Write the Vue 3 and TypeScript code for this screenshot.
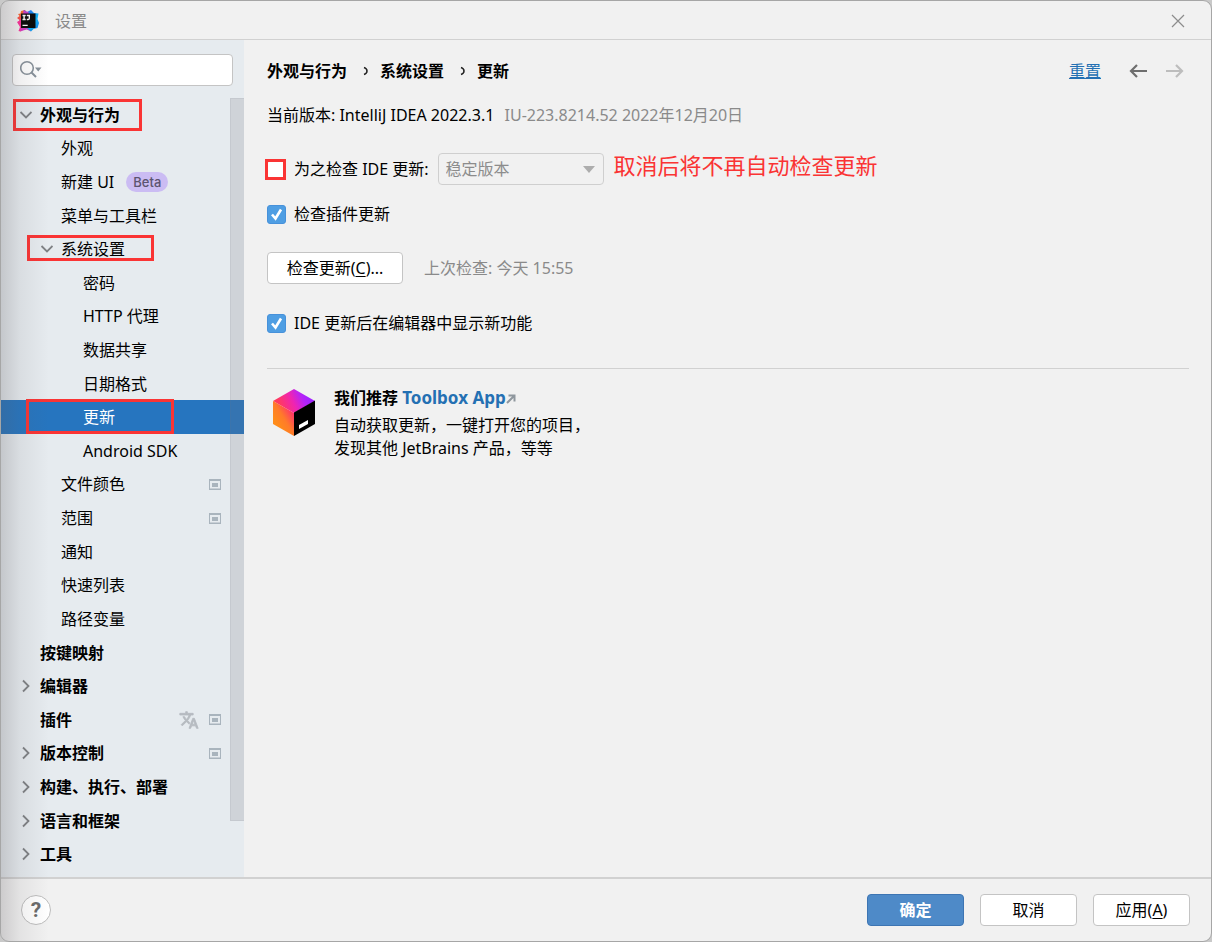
<script setup lang="ts">
import { ref } from 'vue'

interface TreeRow {
  label: string
  level: 0 | 1 | 2
  arrow?: 'open' | 'closed'
  badge?: string
  project?: boolean
  translate?: boolean
  mark?: string
}

const rows: TreeRow[] = [
  { label: '外观与行为', level: 0, arrow: 'open', mark: 'mark-root' },
  { label: '外观', level: 1 },
  { label: '新建 UI', level: 1, badge: 'Beta' },
  { label: '菜单与工具栏', level: 1 },
  { label: '系统设置', level: 1, arrow: 'open', mark: 'mark-group' },
  { label: '密码', level: 2 },
  { label: 'HTTP 代理', level: 2 },
  { label: '数据共享', level: 2 },
  { label: '日期格式', level: 2 },
  { label: '更新', level: 2, mark: 'mark-item' },
  { label: 'Android SDK', level: 2 },
  { label: '文件颜色', level: 1, project: true },
  { label: '范围', level: 1, project: true },
  { label: '通知', level: 1 },
  { label: '快速列表', level: 1 },
  { label: '路径变量', level: 1 },
  { label: '按键映射', level: 0 },
  { label: '编辑器', level: 0, arrow: 'closed' },
  { label: '插件', level: 0, translate: true, project: true },
  { label: '版本控制', level: 0, arrow: 'closed', project: true },
  { label: '构建、执行、部署', level: 0, arrow: 'closed' },
  { label: '语言和框架', level: 0, arrow: 'closed' },
  { label: '工具', level: 0, arrow: 'closed' },
]

const selected = ref('更新')
const query = ref('')
const checkIde = ref(false)
const checkPlugins = ref(true)
const showWhatsNew = ref(true)
const channel = ref('稳定版本')
</script>

<template>
  <div class="desktop">
    <div class="window">
      <header class="titlebar">
        <svg class="logo" viewBox="0 0 22 22" aria-hidden="true">
          <defs>
            <linearGradient id="lgWarm" x1="0" y1="0" x2="0.3" y2="1">
              <stop offset="0" stop-color="#fc801d" />
              <stop offset="0.5" stop-color="#f9593a" />
              <stop offset="1" stop-color="#fe2f6e" />
            </linearGradient>
            <linearGradient id="lgCool" x1="0" y1="0" x2="1" y2="1">
              <stop offset="0" stop-color="#2b5cf5" />
              <stop offset="0.6" stop-color="#0fb5f7" />
              <stop offset="1" stop-color="#1278f0" />
            </linearGradient>
          </defs>
          <path d="M1 4 3.500 3.500 4 1 8 0 11 4 7 13 1 13 2.500 10 0 8 2.500 6z" fill="url(#lgWarm)" />
          <path d="M0 12 5 9 9 18 3.500 21.500 1.500 21 3 17z" fill="#fb3199" />
          <path d="M7 0 10 2 14 0 17 3 21.500 3.500 20.500 9 22 13 20.500 18 16.500 19 14 21.500 8 18z" fill="url(#lgCool)" />
          <path d="M6.500 0 10 2 11.500 1.500V5H6z" fill="#c83cc8" />
          <path d="M4 17h5l5 4.500L10 19.500 6 20.500 3.500 21.500z" fill="#d53ac5" />
          <path d="M4 3.500h14.500V18H4z" fill="#080808" />
          <path d="M5.500 5.500h3.200M7.100 5.500v4M5.500 9.500h3.200M9.800 5.500h3.200M12.300 5.500v2.800q0 1.200-1.200 1.200h-1.300" fill="none" stroke="#fff" stroke-width="1.400" />
          <path d="M5.500 15.300h5.200" stroke="#fff" stroke-width="1.200" />
        </svg>
        <span class="title">设置</span>
        <button class="plain close" type="button" aria-label="关闭">
          <svg viewBox="0 0 14 14"><path d="M1 1l12 12M13 1 1 13" fill="none" stroke="#8c8c8c" stroke-width="1.200" /></svg>
        </button>
      </header>

      <div class="body">
        <aside class="sidebar">
          <label class="search">
            <svg viewBox="0 0 24 20" aria-hidden="true">
              <circle cx="7" cy="8" r="6.300" fill="none" stroke="#87919a" stroke-width="1.600" />
              <path d="M11.500 12.500 16 17" stroke="#87919a" stroke-width="2" />
              <path d="M15 7.500H21.500L18.200 11.500z" fill="#87919a" />
            </svg>
            <input v-model="query" type="text" aria-label="搜索设置" />
          </label>
          <div class="tree-area">
            <ul class="tree" role="tree">
              <li
                v-for="row in rows"
                :key="row.label"
                class="row"
                :class="['level-' + row.level, { selected: selected === row.label }]"
                role="treeitem"
                :aria-selected="selected === row.label"
                @click="selected = row.label"
              >
                <span class="arrow">
                  <svg v-if="row.arrow === 'open'" viewBox="0 0 14 14"><path d="M2.500 4 8 9.500l5.500-5.500" /></svg>
                  <svg v-else-if="row.arrow === 'closed'" viewBox="0 0 14 14"><path d="M5 1.500 10.500 7 5 12.500" /></svg>
                </span>
                <span class="label">{{ row.label }}</span>
                <span v-if="row.badge" class="badge">{{ row.badge }}</span>
                <span class="tail">
                  <svg v-if="row.translate" class="translate" viewBox="0 0 24 24">
                    <path d="M12.870 15.070l-2.540-2.510.03-.03c1.740-1.940 2.980-4.170 3.710-6.530H17V4h-7V2H8v2H1v1.990h11.170C11.500 7.920 10.440 9.750 9 11.350 8.070 10.320 7.300 9.190 6.690 8h-2c.73 1.630 1.730 3.170 2.980 4.560l-5.090 5.020L4 19l5-5 3.110 3.110.76-2.040zM18.500 10h-2L12 22h2l1.120-3h4.750L21 22h2l-4.500-12zm-2.620 7l1.620-4.330L19.120 17h-3.240z" />
                  </svg>
                  <svg v-if="row.project" class="project" viewBox="0 0 12 11">
                    <path d="M0 0h12v11H0zM1 2v7.500h10V2z" fill="#a9b4bd" fill-rule="evenodd" />
                    <path d="M3 4h6v4H3z" fill="#a9b4bd" />
                  </svg>
                </span>
                <span v-if="row.mark" class="mark" :class="row.mark"></span>
              </li>
            </ul>
            <div class="scrollbar"></div>
          </div>
        </aside>

        <main class="content">
          <div class="crumbs">
            <nav>
              <b>外观与行为</b>
              <svg viewBox="0 0 6 10"><path d="M1 1.500q3 1 3 3.500T1 8.500" /></svg>
              <b>系统设置</b>
              <svg viewBox="0 0 6 10"><path d="M1 1.500q3 1 3 3.500T1 8.500" /></svg>
              <b>更新</b>
            </nav>
            <a class="reset" href="#">重置</a>
            <button class="plain nav-arrow" type="button" aria-label="后退">
              <svg viewBox="0 0 18 14"><path d="M18 7H2M8 1 2 7l6 6" stroke="#6e6e6e" /></svg>
            </button>
            <button class="plain nav-arrow" type="button" aria-label="前进" disabled>
              <svg viewBox="0 0 18 14"><path d="M0 7h16M10 1l6 6-6 6" stroke="#bdbdbd" /></svg>
            </button>
          </div>

          <p class="version">当前版本: IntelliJ IDEA 2022.3.1 <span class="muted">IU-223.8214.52 2022年12月20日</span></p>

          <div class="line channel">
            <label class="check">
              <span class="box">
                <input v-model="checkIde" type="checkbox" />
                <svg viewBox="0 0 19 19"><path d="M5 9.500 8.500 13.500 14 4.500" /></svg>
                <span class="mark mark-box"></span>
              </span>
              为之检查 IDE 更新:
            </label>
            <span class="combo">
              <select v-model="channel" :disabled="!checkIde" aria-label="更新渠道">
                <option>稳定版本</option>
              </select>
              <svg viewBox="0 0 12 7"><path d="M0 0h12L6 7z" fill="#adadad" /></svg>
            </span>
            <span class="note">取消后将不再自动检查更新</span>
          </div>

          <div class="line plugins">
            <label class="check">
              <span class="box">
                <input v-model="checkPlugins" type="checkbox" />
                <svg viewBox="0 0 19 19"><path d="M5 9.500 8.500 13.500 14 4.500" /></svg>
              </span>
              检查插件更新
            </label>
          </div>

          <div class="line manual">
            <button class="btn check-now" type="button">检查更新(<u>C</u>)...</button>
            <span class="muted">上次检查: 今天 15:55</span>
          </div>

          <div class="line whats-new">
            <label class="check">
              <span class="box">
                <input v-model="showWhatsNew" type="checkbox" />
                <svg viewBox="0 0 19 19"><path d="M5 9.500 8.500 13.500 14 4.500" /></svg>
              </span>
              IDE 更新后在编辑器中显示新功能
            </label>
          </div>

          <section class="toolbox">
            <svg class="cube" viewBox="0 0 42 47" aria-hidden="true">
              <defs>
                <linearGradient id="cubeLeft" gradientUnits="userSpaceOnUse" x1="2" y1="32" x2="24" y2="18">
                  <stop offset="0" stop-color="#ff8c1a" />
                  <stop offset="0.350" stop-color="#ff7a2a" />
                  <stop offset="0.800" stop-color="#ff2d70" />
                  <stop offset="1" stop-color="#fb2890" />
                </linearGradient>
                <linearGradient id="cubeTop" gradientUnits="userSpaceOnUse" x1="8" y1="18" x2="34" y2="6">
                  <stop offset="0" stop-color="#ff3a60" />
                  <stop offset="0.450" stop-color="#f024b0" />
                  <stop offset="0.800" stop-color="#b823f5" />
                  <stop offset="1" stop-color="#a323ff" />
                </linearGradient>
              </defs>
              <path d="M21 0 42 12 21 24 0 12z" fill="url(#cubeTop)" />
              <path d="M0 12 21 24V47L0 35z" fill="url(#cubeLeft)" />
              <path d="M21 23.500 42 11.500V35L21 47z" fill="#000" />
              <path d="M26 36 35 31V35L26 40z" fill="#fff" />
            </svg>
            <div class="promo">
              <h2>我们推荐 <a href="#">Toolbox App</a>
                <svg viewBox="0 0 10 10"><path d="M1 9 8 2M2.500 1.500H8.500V7.500" fill="none" stroke="#8f979e" stroke-width="2" /></svg>
              </h2>
              <p>自动获取更新，一键打开您的项目，<br />发现其他 JetBrains 产品，等等</p>
            </div>
          </section>
        </main>
      </div>

      <footer class="footer">
        <button class="help" type="button" aria-label="帮助">?</button>
        <button class="btn primary" type="button">确定</button>
        <button class="btn" type="button">取消</button>
        <button class="btn" type="button">应用(<u>A</u>)</button>
      </footer>
    </div>
  </div>
</template>

<style>
html,
body,
#app {
  height: 100%;
  margin: 0;
}
</style>

<style scoped>
* {
  box-sizing: border-box;
}

.desktop {
  height: 100%;
  min-height: 900px;
  background: #c9c9c9;
  font: 16px/24px "Noto Sans", "Noto Sans CJK SC", sans-serif;
  color: #000;
}

.window {
  position: relative;
  display: flex;
  flex-direction: column;
  height: 100%;
  border: 1px solid #a6a6a6;
  border-radius: 9px;
  background: #f1f1f1;
  overflow: hidden;
}

.window::after {
  content: "";
  position: absolute;
  inset: 0 auto 0 0;
  width: 48px;
  background: linear-gradient(90deg, rgba(90, 85, 90, 0.24), rgba(90, 85, 90, 0.09) 40%, rgba(90, 85, 90, 0));
  pointer-events: none;
}

.plain {
  display: flex;
  padding: 0;
  border: 0;
  background: none;
}

.titlebar {
  display: flex;
  align-items: center;
  flex: none;
  height: 39px;
  padding: 1px 26px 0 16px;
  border-bottom: 1px solid #d1d1d1;
}

.logo {
  width: 22px;
  height: 22px;
}

.title {
  flex: 1;
  margin-left: 16px;
  color: #8a8a8a;
}

.close svg {
  width: 14px;
  height: 14px;
}

.body {
  display: flex;
  flex: 1;
  min-height: 0;
}

.sidebar {
  display: flex;
  flex-direction: column;
  flex: none;
  width: 243px;
  background: #e6ebef;
}

.search {
  display: flex;
  align-items: center;
  height: 32px;
  margin: 14px 11px 12px;
  padding-left: 7px;
  border: 1px solid #c4c4c4;
  border-radius: 4px;
  background: #fff;
}

.search svg {
  flex: none;
  width: 24px;
  height: 20px;
}

.search input {
  flex: 1;
  min-width: 0;
  border: 0;
  outline: 0;
  background: none;
  font: inherit;
}

.tree-area {
  position: relative;
  display: flex;
  flex: 1;
  padding-bottom: 6px;
}

.tree {
  display: grid;
  grid-auto-rows: 1fr;
  flex: 1;
  margin: 0;
  padding: 0;
  list-style: none;
}

.row {
  position: relative;
  display: flex;
  align-items: center;
  padding-right: 23px;
  padding-left: 17px;
  white-space: nowrap;
}

.level-0 {
  font-weight: 700;
}

.level-1 {
  padding-left: 38px;
}

.level-2 {
  padding-left: 60px;
}

.selected {
  background: #2675bf;
  color: #fff;
}

.arrow {
  flex: none;
  width: 22px;
  height: 14px;
}

.arrow svg {
  display: block;
  width: 14px;
  height: 14px;
}

.arrow path {
  fill: none;
  stroke: #7f8285;
  stroke-width: 1.8px;
}

.badge {
  margin-left: 12px;
  padding: 0 7px;
  border-radius: 10px;
  background: #cbbcf3;
  color: #5c5470;
  font: 500 13px/20px Inter, sans-serif;
}

.tail {
  display: flex;
  align-items: center;
  gap: 10px;
  margin-left: auto;
}

.translate {
  width: 20px;
  height: 20px;
  fill: #b6bbc0;
  stroke: #b6bbc0;
}

.project {
  width: 12px;
  height: 11px;
}

.scrollbar {
  position: absolute;
  top: 0;
  right: 0;
  bottom: 56px;
  width: 14px;
  border: 1px solid rgba(115, 115, 125, 0.1);
  border-right: 0;
  background: rgba(115, 115, 125, 0.2);
}

.mark {
  position: absolute;
  border: 3px solid #fa3434;
  pointer-events: none;
}

.mark-root {
  inset: 1px 102px 1px 12px;
}

.mark-group {
  inset: 3px 90px 5px 26px;
}

.mark-item {
  inset: -1px 70px 0 25px;
}

.mark-box {
  inset: -1px 0 -1px -2px;
}

.content {
  flex: 1;
  min-width: 0;
  padding: 19px 22px 0 23px;
}

.crumbs,
.crumbs nav {
  display: flex;
  align-items: center;
}

.crumbs {
  padding-right: 5px;
}

.crumbs nav {
  flex: 1;
}

.crumbs nav svg {
  width: 6px;
  height: 10px;
  margin: 0 11px 0 16px;
}

.crumbs nav path {
  fill: none;
  stroke: #222;
  stroke-width: 1.5px;
}

a {
  color: #2470b3;
  text-decoration: none;
}

.reset {
  text-decoration: underline;
}

.nav-arrow {
  margin-left: 19px;
}

.reset + .nav-arrow {
  margin-left: 28px;
}

.nav-arrow svg {
  width: 18px;
  height: 14px;
}

.nav-arrow path {
  fill: none;
  stroke-width: 2.2px;
}

.version {
  margin: 20px 0 0;
}

.muted {
  color: #8a8a8a;
}

.version .muted {
  margin-left: 6px;
}

.line {
  display: flex;
  align-items: center;
}

.channel {
  margin-top: 26px;
}

.plugins {
  margin-top: 17px;
}

.manual {
  gap: 21px;
  margin-top: 26px;
}

.whats-new {
  margin-top: 27px;
}

.check {
  display: flex;
  align-items: center;
  gap: 8px;
}

.box {
  position: relative;
  display: grid;
  width: 19px;
  height: 19px;
}

.box input,
.box svg {
  grid-area: 1 / 1;
  width: 19px;
  height: 19px;
  margin: 0;
}

.box input {
  appearance: none;
  border: 1px solid #b8b8b8;
  border-radius: 3px;
  background: #fff;
}

.box input:checked {
  border-color: #4791da;
  background: #4f9ee3;
}

.box svg {
  visibility: hidden;
  fill: none;
  stroke: #fff;
  stroke-width: 2.6px;
  pointer-events: none;
}

.box input:checked + svg {
  visibility: visible;
}

.combo {
  display: grid;
  align-items: center;
  width: 166px;
  margin-left: 9px;
}

.combo select {
  grid-area: 1 / 1;
  height: 32px;
  padding: 0 28px 0 7px;
  appearance: none;
  border: 1px solid #cfcfcf;
  border-radius: 4px;
  background: #f1f1f1;
  color: #8c8c8c;
  font: inherit;
  opacity: 1;
}

.combo svg {
  grid-area: 1 / 1;
  justify-self: end;
  width: 12px;
  height: 7px;
  margin-right: 9px;
  pointer-events: none;
}

.note {
  margin: 0 0 8px 10px;
  color: #fa3434;
  font-size: 22px;
}

.btn {
  height: 32px;
  min-width: 97px;
  padding: 0 18px;
  border: 1px solid #c4c4c4;
  border-radius: 4px;
  background: #fff;
  color: #000;
  font: inherit;
}

.check-now {
  min-width: 136px;
}

u {
  text-underline-offset: 2px;
}

.toolbox {
  display: flex;
  gap: 19px;
  margin-top: 33px;
  padding: 17px 0 0 6px;
  border-top: 1px solid #d1d1d1;
}

.cube {
  width: 42px;
  height: 47px;
  margin-top: 3px;
}

.promo h2,
.promo p {
  margin: 0;
  font-size: 16px;
  line-height: 23px;
}

.promo h2 {
  padding-bottom: 4px;
}

.promo h2 a {
  font-size: 17px;
}

.promo h2 svg {
  width: 10px;
  height: 10px;
}

.footer {
  display: flex;
  align-items: center;
  flex: none;
  gap: 16px;
  height: 64px;
  padding: 0 21px 0 20px;
  border-top: 2px solid #d1d1d1;
}

.help {
  width: 30px;
  height: 30px;
  margin-right: auto;
  padding: 0;
  border: 1px solid #bdbdbd;
  border-radius: 50%;
  background: #fff;
  color: #6a6a6a;
  font: 700 21px/28px Roboto, sans-serif;
}

.primary {
  border-color: #3d75b3;
  background: #4e8ac8;
  color: #fff;
  font-weight: 700;
}
</style>
